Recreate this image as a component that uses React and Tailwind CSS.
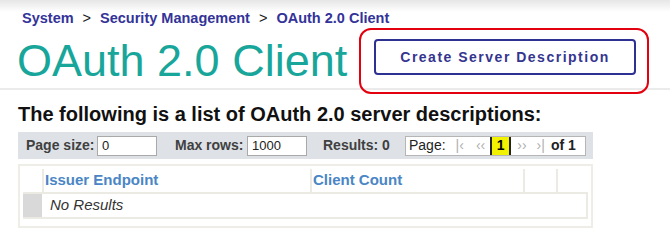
const font = "font-['Liberation_Sans',Arial,sans-serif]";

const Crumb = ({ children }) => (
  <span className="font-bold text-[#333399]">{children}</span>
);

const Sep = () => <span className="mx-[9px] text-[#222]">&gt;</span>;

const Toolbar = () => (
  <div className="mt-[7px] ml-[18px] flex h-[27px] w-[575px] items-center bg-[#dee2e7] text-[14px] text-[#404040]">
    <span className="ml-[8px] w-[71px] font-bold">Page size:</span>
    <div className="flex h-[20px] w-[60px] items-center border border-[#a9a9a9] bg-white pl-[4px] text-[13px] text-[#222]">
      0
    </div>
    <span className="ml-[18px] w-[72px] font-bold">Max rows:</span>
    <div className="flex h-[20px] w-[60px] items-center border border-[#a9a9a9] bg-white pl-[4px] text-[13px] text-[#222]">
      1000
    </div>
    <span className="ml-[16px] w-[82px] font-bold">Results: 0</span>
    <div className="flex h-[20px] w-[181px] items-center border border-[#b5b5b5] bg-white text-[14px] text-[#222]">
      <span className="ml-[3px]">Page:</span>
      <span className="ml-[10px] text-[#b0b0b0]">|‹</span>
      <span className="ml-[12px] text-[#b0b0b0]">‹‹</span>
      <span className="ml-[5px] flex h-[18px] w-[21px] items-center justify-center border-x-2 border-[#222] bg-[#f2f200] font-bold text-black">
        1
      </span>
      <span className="ml-[6px] text-[#b0b0b0]">››</span>
      <span className="ml-[10px] text-[#b0b0b0]">›|</span>
      <span className="ml-[6px] font-bold">of 1</span>
    </div>
  </div>
);

const Results = () => (
  <div className="mt-[5px] ml-[18px] w-[575px] border-2 border-[#eeeee6] p-[3px] pb-[7px]">
    <div className="flex h-[25px] border-b-2 border-[#ebebe3] text-[15px] font-bold text-[#4a86c5]">
      <div className="w-[19px]" />
      <div className="flex w-[268px] items-center border-l-2 border-[#ebebe3] pl-[1px]">
        Issuer Endpoint
      </div>
      <div className="flex w-[213px] items-center border-l-2 border-[#ebebe3] pl-[1px]">
        Client Count
      </div>
      <div className="w-[33px] border-l-2 border-[#ebebe3]" />
      <div className="w-[32px] border-l-2 border-[#ebebe3]" />
    </div>
    <div className="flex h-[25px] border-b-2 border-r-2 border-[#ebebe3]">
      <div className="w-[19px] bg-[#d9d9d9]" />
      <div className="flex flex-1 items-center pl-[8px] text-[15px] italic text-[#333]">
        No Results
      </div>
    </div>
  </div>
);

export default function App() {
  return (
    <div className={`relative h-[247px] w-[670px] overflow-hidden bg-white ${font}`}>
      <div className="h-[90px] border-b-2 border-[#ebebeb] bg-[linear-gradient(#e6e6e6,#ffffff_12px)]">
        <div className="pt-[10px] pl-[22px] text-[14.5px] leading-[16px]">
          <Crumb>System</Crumb>
          <Sep />
          <Crumb>Security Management</Crumb>
          <Sep />
          <Crumb>OAuth 2.0 Client</Crumb>
        </div>
        <div className="mt-[12px] flex items-start">
          <h1 className="w-[374px] pl-[17px] text-[45px] leading-[45px] text-[#18a69b]">
            OAuth 2.0 Client
          </h1>
          <button className="mt-[1px] flex h-[36px] w-[262px] items-center justify-center rounded-[4px] border-2 border-[#2e3192] bg-white text-[14px] font-bold tracking-[1.5px] text-[#35358f]">
            Create Server Description
          </button>
        </div>
      </div>

      <h2 className="mt-[13px] pl-[18px] text-[20px] leading-[22px] font-bold text-[#111]">
        The following is a list of OAuth 2.0 server descriptions:
      </h2>

      <Toolbar />
      <Results />

      <div className="pointer-events-none absolute top-[28px] left-[359px] h-[66px] w-[290px] rounded-[12px] border-2 border-[#e3000f]" />
    </div>
  );
}
